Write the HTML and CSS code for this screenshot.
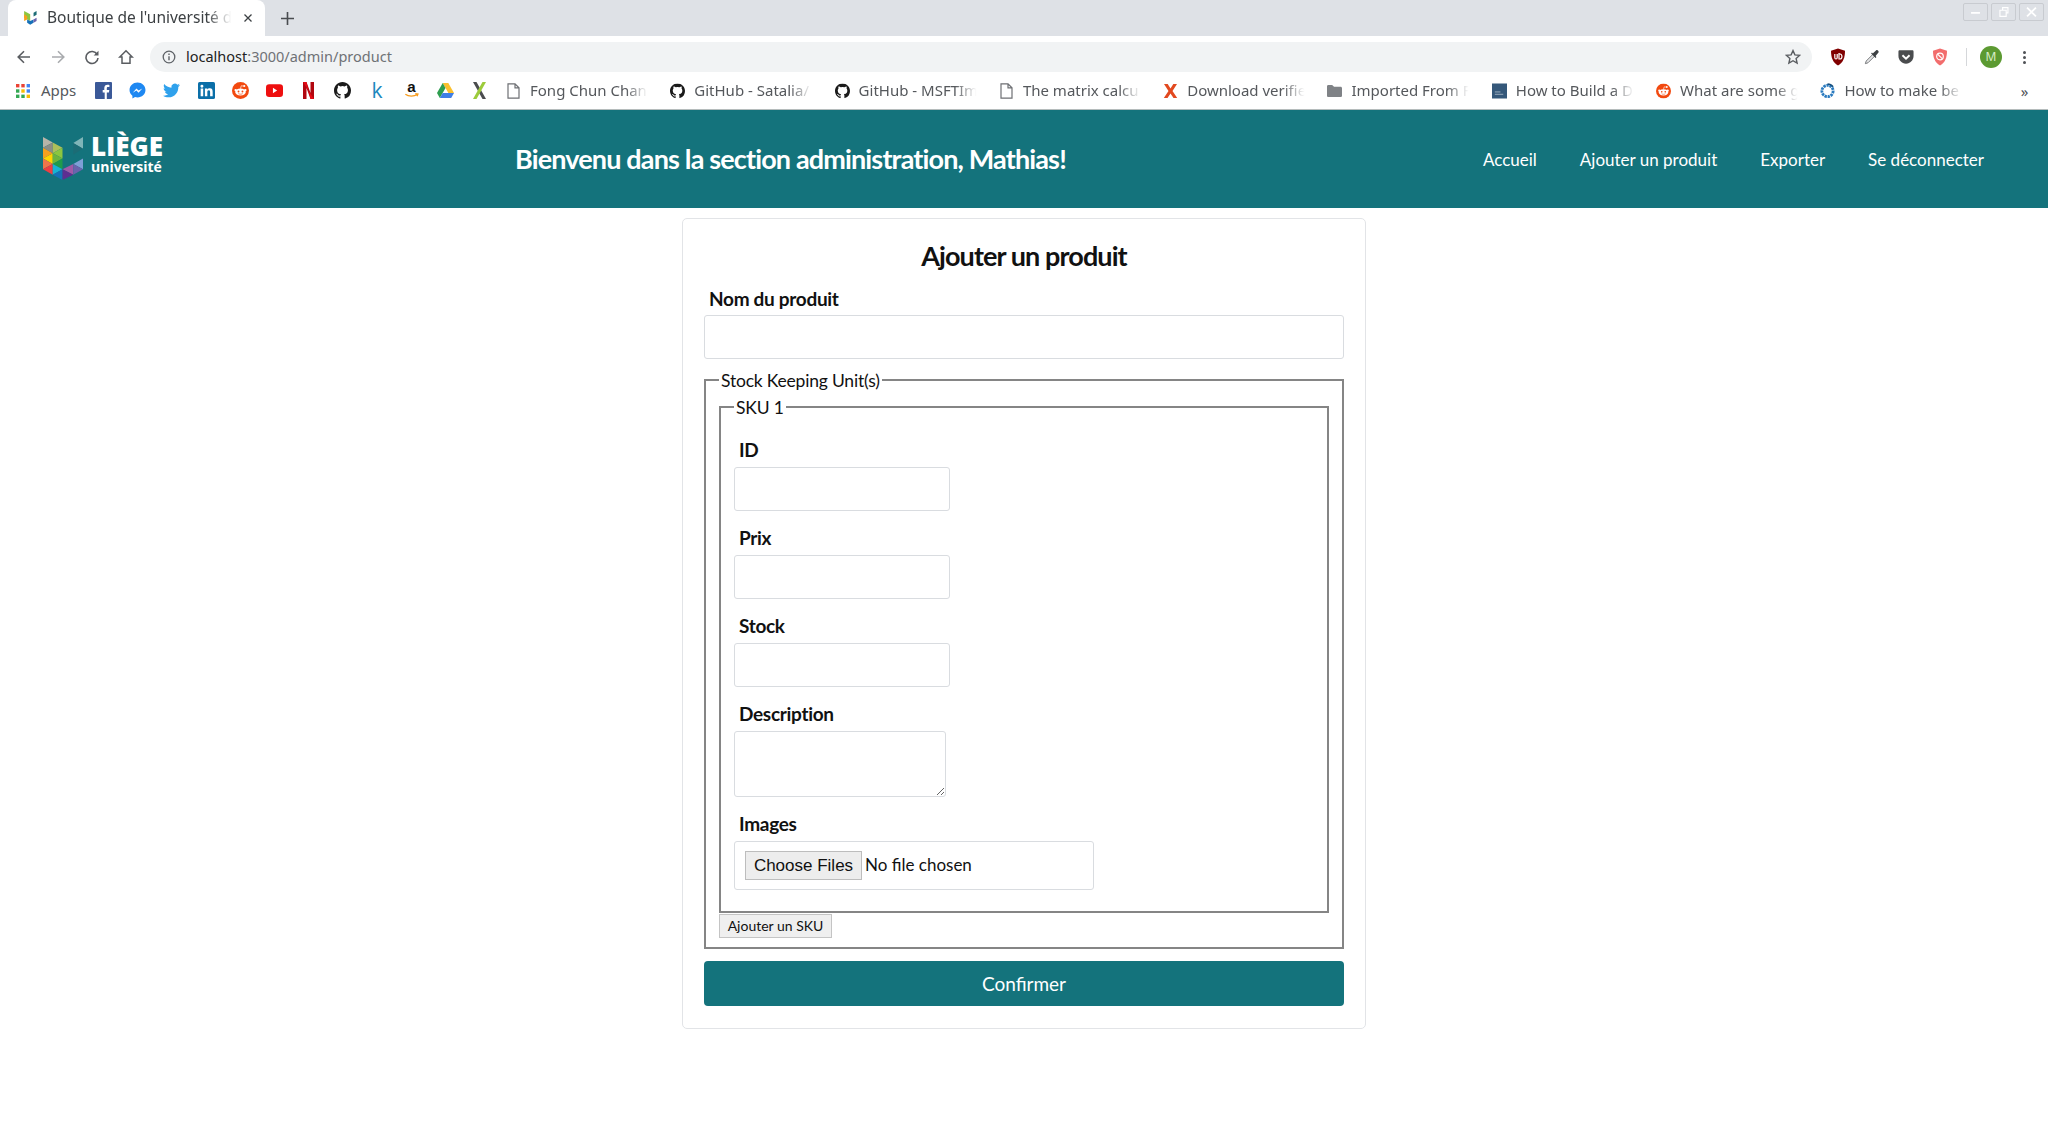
FILE: index.html
```html
<!DOCTYPE html>
<html lang="fr">
<head>
    <meta charset="utf-8">
    <title>Boutique de l'université de Liège</title>
    <link rel="stylesheet" href="styles.css">
</head>
<body>
    <svg class="sprites" width="0" height="0">
        <symbol id="i-github" viewBox="0 0 16 16"><path fill="#1b1b1b" d="M8 0C3.58 0 0 3.58 0 8c0 3.54 2.29 6.53 5.47 7.59.4.07.55-.17.55-.38v-1.49c-2.01.37-2.53-.49-2.69-.94-.09-.23-.48-.94-.82-1.13-.28-.15-.68-.52-.01-.53.63-.01 1.08.58 1.23.82.72 1.21 1.87.87 2.33.66.07-.52.28-.87.51-1.07-1.78-.2-3.64-.89-3.64-3.95 0-.87.31-1.59.82-2.15-.08-.2-.36-1.02.08-2.12 0 0 .67-.21 2.2.82a7.4 7.4 0 0 1 4 0c1.53-1.04 2.2-.82 2.2-.82.44 1.1.16 1.92.08 2.12.51.56.82 1.27.82 2.15 0 3.07-1.87 3.75-3.65 3.95.29.25.54.73.54 1.48v2.2c0 .21.15.46.55.38A8 8 0 0 0 16 8c0-4.42-3.58-8-8-8z"/></symbol>
        <symbol id="i-reddit" viewBox="0 0 18 18"><circle cx="9" cy="9" r="9" fill="#f2490f"/><ellipse cx="9" cy="10.6" rx="5.6" ry="3.7" fill="#fff"/><circle cx="3.9" cy="8.6" r="1.3" fill="#fff"/><circle cx="14.1" cy="8.6" r="1.3" fill="#fff"/><circle cx="13" cy="4.2" r="1.1" fill="#fff"/><path d="M9 7l.8-3 3 .4" fill="none" stroke="#fff" stroke-width=".7"/><circle cx="6.9" cy="10" r="1" fill="#f2490f"/><circle cx="11.1" cy="10" r="1" fill="#f2490f"/><path d="M6.7 12.3c1.3.8 3.3.8 4.6 0" fill="none" stroke="#f2490f" stroke-width=".7"/></symbol>
        <symbol id="i-doc" viewBox="0 0 14 16"><path d="M1.5.8h7l4 4v10.4h-11z M8.5.8v4h4" fill="#fff" stroke="#6d6f73" stroke-width="1.2"/></symbol>
    </svg>

    <div class="tabstrip">
        <div class="tab">
            <svg class="tab-icon" viewBox="0 0 42 46"><path fill="#8cc63f" d="M0 0l20 11v22L0 22z"/><path fill="#f6a01e" d="M0 11l10 6v11L0 33z"/><path fill="#1570b8" d="M10 28l10 5 11-5v11l-11 6-10-6z"/><path fill="#6a63ad" d="M31 28l10-6v11l-10 6z"/><path fill="#1c6c75" d="M31 6l10-6v12l-10 6z"/></svg>
            <span class="tab-title">Boutique de l'université d</span>
            <svg class="tab-close" viewBox="0 0 10 10"><path d="M1.5 1.5l7 7M8.500 1.500l-7 7" stroke="#3c4043" stroke-width="1.3"/></svg>
        </div>
        <svg class="tab-new" viewBox="0 0 12 12"><path d="M6 0v12M0 6h12" stroke="#494c50" stroke-width="1.5"/></svg>
        <div class="win-buttons">
            <div class="win-btn"><svg viewBox="0 0 24 18"><path d="M7 10h10" stroke="#fff" stroke-width="2"/></svg></div>
            <div class="win-btn"><svg viewBox="0 0 24 18"><path d="M8 7h7v7H8zM11 7V4h6v6h-2" fill="none" stroke="#fff" stroke-width="1.3"/></svg></div>
            <div class="win-btn"><svg viewBox="0 0 24 18"><path d="M7 4l10 10M17 4L7 14" stroke="#fff" stroke-width="2"/></svg></div>
        </div>
    </div>

    <div class="toolbar">
        <div class="nav-btns">
            <svg viewBox="0 0 16 16"><path d="M14 8H2.5M8 2.2L2.2 8 8 13.8" fill="none" stroke="#5a5d61" stroke-width="1.6"/></svg>
            <svg viewBox="0 0 16 16"><path d="M2 8h11.5M8 2.2L13.8 8 8 13.8" fill="none" stroke="#a9abae" stroke-width="1.6"/></svg>
            <svg viewBox="0 0 16 16"><path d="M13.2 5.5A6 6 0 1 0 14 9" fill="none" stroke="#5a5d61" stroke-width="1.6"/><path d="M14.5 1.8v4.8H9.7z" fill="#5a5d61"/></svg>
            <svg viewBox="0 0 16 16"><path d="M8 1.8L1.8 8H4v6.2h8V8h2.2z" fill="none" stroke="#5a5d61" stroke-width="1.5"/></svg>
        </div>
        <div class="omnibox">
            <svg class="omni-info" viewBox="0 0 14 14"><circle cx="7" cy="7" r="5.8" fill="none" stroke="#5f6368" stroke-width="1.3"/><path d="M7 6.2v4M7 3.6v1.4" stroke="#5f6368" stroke-width="1.4"/></svg>
            <span class="url"><b>localhost</b>:3000/admin/product</span>
            <svg class="omni-star" viewBox="0 0 16 16"><path d="M8 1.6l1.9 4.3 4.7.5-3.5 3.1 1 4.6L8 11.7l-4.1 2.4 1-4.6-3.5-3.1 4.7-.5z" fill="none" stroke="#5a5d61" stroke-width="1.4"/></svg>
        </div>
        <div class="extensions">
            <svg viewBox="0 0 16 18"><path d="M8 .5l7 2.200c0 6.500-1.500 11.500-7 14.800C2.500 14.200 1 9.200 1 2.700z" fill="#800000"/><path d="M4.800 6v3.500c0 2 2.400 2 2.400 0V6M9 5v6h1c2.600 0 2.600-5 0-5H9" fill="none" stroke="#fff" stroke-width="1.200"/></svg>
            <svg viewBox="0 0 18 18"><path d="M10.500 5.500L2.500 13.500 1.500 16.500 4.500 15.500 12.500 7.500z" fill="#e4e5e6" stroke="#77797c" stroke-width="1.100"/><path d="M9.800 5l4-3.500c1.200-1 3.500 1.300 2.500 2.500L13 8l1 1-1 1-5-5 1-1z" fill="#3c4043"/></svg>
            <svg viewBox="0 0 18 16"><path d="M2 .5h14c.9 0 1.500.6 1.500 1.500v5c0 4.500-3.700 8.500-8.500 8.500S.5 11.500.5 7V2C.5 1.100 1.100.5 2 .5z" fill="#4a4c4e"/><path d="M5 6l4 3.800L13 6" fill="none" stroke="#fff" stroke-width="2.200"/></svg>
            <svg viewBox="0 0 16 18"><path d="M8 .5l7 2.200c0 6.500-1.500 11.500-7 14.800C2.500 14.200 1 9.200 1 2.700z" fill="#f26d6d"/><circle cx="8" cy="8.500" r="3.300" fill="none" stroke="#fff" stroke-width="1.200"/><path d="M5.800 6.300l4.400 4.400" stroke="#fff" stroke-width="1.200"/></svg>
        </div>
        <div class="toolbar-sep"></div>
        <div class="avatar">M</div>
        <div class="kebab"><i></i><i></i><i></i></div>
    </div>

    <div class="bookmarks">
        <div class="bm-apps">
            <svg viewBox="0 0 14 14"><rect width="3.400" height="3.400" fill="#ea4335"/><rect x="5.300" width="3.400" height="3.400" fill="#ea4335"/><rect x="10.600" width="3.400" height="3.400" fill="#4285f4"/><rect y="5.300" width="3.400" height="3.400" fill="#34a853"/><rect x="5.300" y="5.300" width="3.400" height="3.400" fill="#fbbc05"/><rect x="10.600" y="5.300" width="3.400" height="3.400" fill="#4285f4"/><rect y="10.600" width="3.400" height="3.400" fill="#34a853"/><rect x="5.300" y="10.600" width="3.400" height="3.400" fill="#34a853"/><rect x="10.600" y="10.600" width="3.400" height="3.400" fill="#fbbc05"/></svg>
            <span>Apps</span>
        </div>
        <div class="bm-icons">
            <svg viewBox="0 0 17 17"><rect width="17" height="17" rx="1" fill="#3b5998"/><path d="M11.800 17v-6.500h2.100l.4-2.500h-2.500V6.400c0-.8.300-1.300 1.300-1.300h1.300V2.900c-.3 0-1-.1-1.900-.1-2 0-3.200 1.200-3.200 3.300V8H7.700v2.500h2V17z" fill="#fff"/></svg>
            <svg viewBox="0 0 16 16"><path d="M8 .5C3.800.5.500 3.600.500 7.500c0 2.200 1 4.100 2.700 5.400v2.700l2.500-1.400c.7.200 1.500.3 2.300.3 4.200 0 7.500-3.100 7.500-7S12.200.5 8 .5z" fill="#1e88f2"/><path d="M3.500 10l3.500-4 2 2 3.500-2-3.500 4-2-2z" fill="#fff"/></svg>
            <svg viewBox="0 0 18 15"><path d="M18 1.800c-.7.300-1.400.5-2.100.6.800-.5 1.300-1.200 1.600-2-.7.400-1.500.7-2.300.9A3.700 3.700 0 0 0 8.900 4.600C5.800 4.400 3.100 3 1.300.7c-1 1.700-.5 3.800 1.100 4.900-.6 0-1.200-.2-1.700-.5 0 1.800 1.300 3.300 3 3.700-.5.100-1.100.2-1.700.1.500 1.500 1.900 2.500 3.500 2.600A7.400 7.400 0 0 1 0 13c1.700 1.100 3.700 1.700 5.700 1.700 6.900 0 10.800-5.800 10.500-11 .7-.5 1.300-1.200 1.800-1.900z" fill="#2fa1ec"/></svg>
            <svg viewBox="0 0 16 16"><rect width="16" height="16" rx="1.500" fill="#0b6fa8"/><path d="M2.500 6h2.400v7.500H2.500zM3.700 2.500a1.400 1.400 0 1 1 0 2.800 1.400 1.400 0 0 1 0-2.800zM6.500 6h2.300v1c.4-.7 1.200-1.200 2.300-1.200 2.300 0 2.700 1.500 2.700 3.500v4.200h-2.400V9.800c0-.9 0-2-1.200-2s-1.400.9-1.400 1.900v3.800H6.500z" fill="#fff"/></svg>
            <svg viewBox="0 0 18 18"><use href="#i-reddit"/></svg>
            <svg viewBox="0 0 16 12"><rect width="16" height="12" rx="3" fill="#ee0f0f"/><path d="M6.500 3.500v5L10.500 6z" fill="#fff"/></svg>
            <svg viewBox="0 0 11 17"><path d="M0 0h3.500l4 11V0H11v17H7.500l-4-11v11H0z" fill="#b1060f"/><path d="M0 0h3.500l4 17.000H11" fill="#e50914"/></svg>
            <svg viewBox="0 0 16 16"><use href="#i-github"/></svg>
            <span class="bm-k">k</span>
            <svg class="bm-amazon" viewBox="0 0 16 18"><text class="bm-a" x="8" y="11" text-anchor="middle">a</text><path d="M1.500 13c3.500 2.500 9 2.500 13 0M12 12.300l2.800.4-.9 2.300" fill="none" stroke="#f79c1d" stroke-width="1.400"/></svg>
            <svg viewBox="0 0 17 15"><path d="M5.700 0h5.600L17 10h-5.600z" fill="#fbc02d"/><path d="M5.700 0L0 10l2.800 5 5.700-10z" fill="#2e9e4f"/><path d="M2.800 15h11.400l2.800-5H5.600z" fill="#3f7fe6"/></svg>
            <svg viewBox="0 0 15 17"><path d="M1 0h3.500L14 17h-3.500z" fill="#4a4c4e"/><path d="M10.500 0H14L4.500 17H1z" fill="#9ccb3b"/></svg>
        </div>
        <div class="bm"><svg viewBox="0 0 14 16"><use href="#i-doc"/></svg><span>Fong Chun Chan</span></div>
        <div class="bm"><svg viewBox="0 0 16 16"><use href="#i-github"/></svg><span>GitHub - Satalia/</span></div>
        <div class="bm"><svg viewBox="0 0 16 16"><use href="#i-github"/></svg><span>GitHub - MSFTIm</span></div>
        <div class="bm"><svg viewBox="0 0 14 16"><use href="#i-doc"/></svg><span>The matrix calcu</span></div>
        <div class="bm"><svg viewBox="0 0 14 16"><path d="M.5 1h3.700L7 5.500 9.800 1h3.700L9 8l4.700 7H10L7 10.500 4 15H.3L5 8z" fill="#e2491f"/></svg><span>Download verifie</span></div>
        <div class="bm"><svg viewBox="0 0 16 14"><path d="M0 2c0-.8.600-1.500 1.500-1.500h4L7.500 2.500h7c.8 0 1.500.7 1.500 1.500v8c0 .8-.7 1.500-1.500 1.500h-13C.6 13.500 0 12.800 0 12z" fill="#7f8286"/></svg><span>Imported From F</span></div>
        <div class="bm"><svg viewBox="0 0 16 16"><rect width="16" height="16" fill="#35587a"/><path d="M3 9h6M3 11.500h9" stroke="#b9c6d2" stroke-width=".8"/></svg><span>How to Build a D</span></div>
        <div class="bm"><svg viewBox="0 0 18 18"><use href="#i-reddit"/></svg><span>What are some g</span></div>
        <div class="bm"><svg viewBox="0 0 16 16"><circle cx="8" cy="8" r="6" fill="none" stroke="#2b7bbf" stroke-width="3" stroke-dasharray="2.500 .8"/><path d="M8 .5a7.500 7.500 0 0 1 6 3" fill="none" stroke="#17507f" stroke-width="1.500"/></svg><span>How to make be</span></div>
        <div class="bm-more">»</div>
    </div>

    <header class="site-header">
        <a class="logo">
            <svg class="logo-mark" viewBox="0 0 42 46">
                <path fill="#b8b4a8" d="M0 0l10 5.500L0 11z"/>
                <path fill="#8d8d86" d="M0 11l10-5.500v11z"/>
                <path fill="#f6a01e" d="M0 11l10 5.500L0 22z"/>
                <path fill="#ffd400" d="M0 22l10-5.500v11z"/>
                <path fill="#f0754a" d="M0 22l10 5.500L0 33z"/>
                <path fill="#ee3e42" d="M0 33l10-5.500v11z"/>
                <path fill="#aebf5a" d="M10 5.500L20 11l-10 5.500z"/>
                <path fill="#8cc63f" d="M10 16.500L20 11v11z"/>
                <path fill="#6cb43f" d="M10 16.500L20 22l-10 5.500z"/>
                <path fill="#1f9b4a" d="M10 27.500L20 22v11z"/>
                <path fill="#17b3d4" d="M10 27.500L20 33l-10 5.500z"/>
                <path fill="#1570b8" d="M10 38.500L20 33v11z"/>
                <path fill="#a05aa8" d="M20 33l11-5.500v11z"/>
                <path fill="#5e2d91" d="M20 33l11 5.500L20 44z"/>
                <path fill="#7f9fd6" d="M31 27.500L41 22v11z"/>
                <path fill="#6a63ad" d="M31 27.500L41 33l-10 5.500z"/>
                <path fill="#7fb5b8" d="M31 6l10-6v12z"/>
                <path fill="#1c6c75" d="M31 6l10 6-10 6z"/>
            </svg>
            <span class="logo-text"><strong>LIÈGE</strong><small>université</small></span>
        </a>
        <h1 class="site-title">Bienvenu dans la section administration, Mathias!</h1>
        <nav class="site-nav">
            <a href="#">Accueil</a>
            <a href="#">Ajouter un produit</a>
            <a href="#">Exporter</a>
            <a href="#">Se déconnecter</a>
        </nav>
    </header>

    <main class="card">
        <h2>Ajouter un produit</h2>
        <form>
            <label for="name">Nom du produit</label>
            <input type="text" id="name" class="field field-wide">

            <fieldset class="sku-list">
                <legend>Stock Keeping Unit(s)</legend>
                <fieldset class="sku">
                    <legend>SKU 1</legend>
                    <label for="sku-id">ID</label>
                    <input type="text" id="sku-id" class="field field-short">
                    <label for="sku-price">Prix</label>
                    <input type="text" id="sku-price" class="field field-short">
                    <label for="sku-stock">Stock</label>
                    <input type="text" id="sku-stock" class="field field-short">
                    <label for="sku-desc">Description</label>
                    <textarea id="sku-desc" class="field field-area"></textarea>
                    <label for="sku-images">Images</label>
                    <input type="file" id="sku-images" class="field field-file" multiple>
                </fieldset>
                <button type="button" class="add-sku">Ajouter un SKU</button>
            </fieldset>

            <button type="button" class="submit">Confirmer</button>
        </form>
    </main>
</body>
</html>
```

FILE: styles.css
```css
* {
    box-sizing: border-box;
}

body {
    margin: 0;
    background: #fff;
    color: #111;
    font-family: Lato, Arial, sans-serif;
}

.sprites {
    position: absolute;
}

/* browser chrome */
.tabstrip {
    display: flex;
    align-items: flex-start;
    height: 36px;
    padding-left: 8px;
    background: #dee1e6;
}

.tab {
    display: flex;
    align-items: center;
    width: 257px;
    height: 36px;
    padding-left: 16px;
    background: #fff;
    border-radius: 8px 8px 0 0;
    font: 15.5px "Noto Sans", sans-serif;
    color: #3c4043;
}

.tab-icon {
    width: 13px;
    height: 14px;
    flex: none;
}

.tab-title {
    width: 190px;
    margin: -2px 0 0 10px;
    overflow: hidden;
    white-space: nowrap;
    -webkit-mask-image: linear-gradient(to right, #000 84%, transparent 97%);
    mask-image: linear-gradient(to right, #000 84%, transparent 97%);
}

.tab-close {
    width: 10px;
    height: 10px;
    margin-left: 6px;
}

.tab-new {
    width: 13px;
    height: 13px;
    margin: 12px 0 0 16px;
}

.win-buttons {
    display: flex;
    gap: 3px;
    margin: 3px 4px 0 auto;
}

.win-btn {
    width: 25px;
    height: 18px;
    border: 1px solid #c8cbd0;
    border-radius: 2px;
}

.win-btn svg {
    display: block;
    width: 100%;
    height: 100%;
}

.toolbar {
    display: flex;
    align-items: center;
    height: 36px;
    padding: 6px 0 0 16px;
    background: #fff;
}

.nav-btns {
    display: flex;
    gap: 18px;
}

.nav-btns svg {
    width: 16px;
    height: 16px;
}

.omnibox {
    display: flex;
    align-items: center;
    width: 1662px;
    height: 30px;
    margin-left: 16px;
    padding: 0 11px 0 12px;
    background: #f1f3f4;
    border-radius: 15px;
}

.omni-info {
    width: 14px;
    height: 14px;
}

.url {
    margin: -2px 0 0 10px;
    font: 14.5px "Noto Sans", sans-serif;
    color: #6f7276;
}

.url b {
    font-weight: 400;
    color: #222;
}

.omni-star {
    width: 16px;
    height: 16px;
    margin-left: auto;
}

.extensions {
    display: flex;
    align-items: center;
    gap: 18px;
    margin-left: 18px;
}

.extensions svg {
    width: 16px;
    height: 18px;
}

.toolbar-sep {
    width: 1px;
    height: 18px;
    margin-left: 18px;
    background: #d5d7da;
}

.avatar {
    width: 22px;
    height: 22px;
    margin-left: 13px;
    background: #5c9a32;
    border-radius: 50%;
    color: #d7ecc8;
    font: 12px/22px "Noto Sans", sans-serif;
    text-align: center;
}

.kebab {
    display: flex;
    flex-direction: column;
    gap: 2px;
    margin-left: 21px;
}

.kebab i {
    display: block;
    width: 3px;
    height: 3px;
    background: #4f5256;
    border-radius: 50%;
}

.bookmarks {
    display: flex;
    align-items: center;
    height: 38px;
    padding-left: 16px;
    background: #fff;
    border-bottom: 1px solid #b5bcbc;
    font: 15px "Noto Sans", sans-serif;
    color: #55585c;
}

.bookmarks span {
    margin-top: -2px;
}

.bm-apps {
    display: flex;
    align-items: center;
    gap: 11px;
    width: 79px;
}

.bm-apps svg {
    width: 14px;
    height: 14px;
}

.bm-icons {
    display: flex;
    align-items: center;
    width: 411px;
}

.bm-icons > * {
    flex: none;
    width: 17px;
    height: 17px;
    margin-right: 17.2px;
}

.bm-icons .bm-k {
    margin-top: 0;
    color: #1b87bd;
    font: 400 21px/17px "Open Sans", sans-serif;
    text-align: center;
}

.bm-icons .bm-amazon {
    overflow: visible;
}

.bm-a {
    font: 700 16px "Liberation Sans", sans-serif;
    fill: #111;
}

.bm {
    display: flex;
    align-items: center;
    flex: none;
    gap: 9px;
    width: 164.3px;
}

.bm svg {
    flex: none;
    width: 15px;
    height: 16px;
}

.bm span {
    width: 120px;
    overflow: hidden;
    white-space: nowrap;
    -webkit-mask-image: linear-gradient(to right, #000 80%, transparent 98%);
    mask-image: linear-gradient(to right, #000 80%, transparent 98%);
}

.bm-more {
    margin-left: 36px;
    color: #4f5256;
}

/* site */
.site-header {
    display: flex;
    align-items: center;
    height: 98px;
    padding: 0 64px 0 43px;
    background: #14737c;
    color: #fff;
}

.logo {
    display: flex;
    align-items: center;
    gap: 7px;
    width: 119px;
}

.logo-mark {
    flex: none;
    width: 41px;
    height: 45px;
}

.logo-text {
    display: flex;
    flex-direction: column;
    margin-top: -12px;
    font-family: "Open Sans", sans-serif;
    font-weight: 700;
    line-height: 1;
}

.logo-text strong {
    font-size: 26px;
    line-height: 26px;
}

.logo-text small {
    font-size: 14px;
    line-height: 15px;
}

.site-title {
    margin: -2px 0 0 353px;
    font-size: 27px;
    font-weight: 700;
    letter-spacing: -.85px;
    white-space: nowrap;
}

.site-nav {
    display: flex;
    gap: 43px;
    margin-left: auto;
}

.site-nav a {
    color: #fff;
    font-size: 17px;
    text-decoration: none;
}

.card {
    width: 684px;
    margin: 10px auto 0;
    padding: 20px 21px 22px;
    border: 1px solid #e2e4e7;
    border-radius: 5px;
}

.card h2 {
    margin: 0 0 13px;
    font-size: 27px;
    font-weight: 700;
    line-height: 34px;
    letter-spacing: -.9px;
    text-align: center;
}

label {
    display: block;
    height: 24px;
    margin-bottom: 6px;
    padding-left: 5px;
    font-size: 19px;
    font-weight: 700;
    line-height: 25px;
    letter-spacing: -.3px;
}

.card > form > label {
    margin-bottom: 5px;
}

.field {
    display: block;
    height: 44px;
    margin: 0 0 14px;
    padding: 0 8px;
    background: #fff;
    border: 1px solid #d9dce0;
    border-radius: 3px;
    font-family: Lato, sans-serif;
}

.field-wide {
    width: 100%;
    margin-bottom: 10px;
}

.field-short {
    width: 216px;
}

.field-area {
    width: 212px;
    height: 66px;
    margin-bottom: 14px;
}

.field-file {
    width: 360px;
    height: 49px;
    margin-bottom: 0;
    padding: 9px 10px;
    font-size: 17px;
}

.field-file::file-selector-button {
    width: 117px;
    height: 29px;
    margin-right: 3px;
    padding: 0;
    background: #ededed;
    border: 1px solid #bdbdbd;
    border-radius: 0;
    font: 17px "Liberation Sans", sans-serif;
    color: #111;
}

fieldset {
    min-width: 0;
    margin: 0;
    padding: 0 13px 9px;
    border: 2px solid #858585;
}

legend {
    height: 22px;
    padding: 0 2px;
    font-size: 17.5px;
    line-height: 24px;
    letter-spacing: -.2px;
}

.sku-list {
    margin-bottom: 12px;
}

.sku {
    margin-top: 5px;
    padding-top: 19px;
    padding-bottom: 21px;
}

.add-sku {
    display: block;
    width: 113px;
    height: 24px;
    margin-top: 1px;
    padding: 0 0 2px;
    background: #efefef;
    border: 1px solid #c4c4c4;
    font: 14px Lato, sans-serif;
    color: #111;
}

.submit {
    display: block;
    width: 100%;
    height: 45px;
    background: #14737c;
    border: 0;
    border-radius: 4px;
    color: #fff;
    font: 19px Lato, sans-serif;
}
```
